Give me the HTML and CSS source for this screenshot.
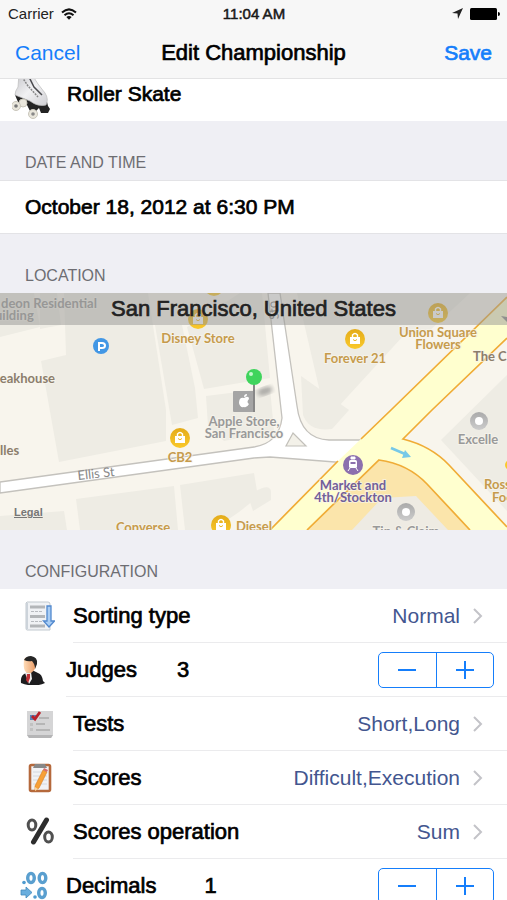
FILE: index.html
```html
<!DOCTYPE html>
<html lang="en">
<head>
    <meta charset="UTF-8">
    <meta name="viewport" content="width=device-width, initial-scale=1.0">
    <title>Edit Championship</title>
    <link rel="stylesheet" href="styles.css">
</head>
<body>
    <header class="top">
        <div class="status">
            <div class="status-left">
                <span>Carrier</span>
                <svg width="16" height="12" viewBox="0 0 16 12">
                    <g fill="none" stroke="#111" stroke-width="2">
                        <path d="M1 4.6Q8-1.800 15 4.600"/>
                        <path d="M3.500 7.300Q8 3.200 12.500 7.300"/>
                    </g>
                    <path d="M5.300 9Q8 6.800 10.700 9L8 11.800z" fill="#111"/>
                </svg>
            </div>
            <span class="clock">11:04 AM</span>
            <div class="status-right">
                <svg width="11" height="11" viewBox="0 0 11 11"><path d="M11 0L6 11L5.500 5.500L0 5z" fill="#222"/></svg>
                <svg width="30" height="12" viewBox="0 0 30 12">
                    <rect width="27" height="12" rx="1.500"/>
                    <path d="M28 4Q30 4 30 6Q30 8 28 8z"/>
                </svg>
            </div>
        </div>
        <nav class="nav">
            <button class="nav-btn">Cancel</button>
            <h1>Edit Championship</h1>
            <button class="nav-btn save">Save</button>
        </nav>
    </header>

    <main>
        <div class="row sport">
            <svg class="skate" width="40" height="54" viewBox="0 0 40 54">
                <defs>
                    <linearGradient id="boot" x1="0" x2="1" y2="1">
                        <stop offset="0" stop-color="#c4c4c8"/>
                        <stop offset=".5" stop-color="#f1f1f3"/>
                        <stop offset="1" stop-color="#d0d0d4"/>
                    </linearGradient>
                </defs>
                <path d="M3 28L5 25L20 32L35 35L36 39L38 42L36 46L29 46L27 41L24 44L18 44L15 38L6 35z" fill="#232323"/>
                <path d="M7 6L19 6L26 17L33 26Q37 32 34 38Q26 40 18 34L3 28Q3 24 6 20z" fill="url(#boot)" stroke="#bbb" stroke-width=".7"/>
                <path d="M10 10L16 19L26 30" fill="none" stroke="#888" stroke-width="1.500" stroke-dasharray="2 1"/>
                <path d="M16 8L22 20L30 28" fill="none" stroke="#4a4a4e" stroke-width="1.500"/>
                <g fill="#e9e6dc" stroke="#c9c6bb">
                    <circle cx="11" cy="36" r="4"/><circle cx="4" cy="39" r="4.500"/><circle cx="21" cy="47" r="4.500"/>
                </g>
                <circle cx="4" cy="39" r="1.800" fill="#777"/><circle cx="21" cy="47" r="1.800" fill="#888"/>
            </svg>
            <span class="label small">Roller Skate</span>
        </div>

        <h2>Date and Time</h2>
        <div class="row date"><span class="label small">October 18, 2012 at 6:30 PM</span></div>

        <h2>Location</h2>
        <section class="map">
            <svg class="map-art" viewBox="0 0 507 237" preserveAspectRatio="xMidYMid slice">
                <defs>
                    <linearGradient id="gold" x2="0" y2="1"><stop stop-color="#e3ab1a"/><stop offset="1" stop-color="#fac92b"/></linearGradient>
                    <linearGradient id="grey" x2="0" y2="1"><stop stop-color="#aaa"/><stop offset="1" stop-color="#ccc"/></linearGradient>
                    <filter id="soft"><feGaussianBlur stdDeviation="2"/></filter>
                    <g id="shop">
                        <circle r="10" fill="url(#gold)"/>
                        <path d="M-5-2H5V5H-5z" fill="#fff"/>
                        <path d="M-2.500-2V-4Q0-7 2.500-4V-2" fill="none" stroke="#fff" stroke-width="1.400"/>
                        <path d="M-2 .5Q0 3 2 .5" fill="none" stroke="#ebb723"/>
                    </g>
                    <g id="dot"><circle r="9" fill="url(#grey)"/><circle r="4" fill="#fff"/></g>
                </defs>
                <rect width="507" height="237" fill="#f8f5ed"/>
                <!-- buildings -->
                <g fill="#eeece4">
                    <path d="M0 0H34L40 34L0 44z"/>
                    <path d="M40 0H57L61 32L40 36z"/>
                    <path d="M64 0H148L166 117L166 148L59 169L41 68L66 62z"/>
                    <path d="M155 32H182L195 95L198 125L172 132z"/>
                    <path d="M187 34L240 0H262L270 85L204 96z"/>
                    <path d="M206 103L270 95L274 138L224 148L208 133z"/>
                    <path d="M76 206L174 193L178 237H80z"/>
                    <path d="M180 192L254 180L258 204L239 219L213 237H185z"/>
                    <path d="M0 223L64 218L67 237H0z"/>
                    <path d="M297 0H470L427 40L404 42L338 114L323 112z"/>
                    <path d="M301 83L349 117L332 136Q309 139 303 122z"/>
                    <path d="M507 82L441 147L507 218z"/>
                    <path d="M248 203Q270 188 271 199V207L253 218z"/>
                </g>
                <path d="M307 237L379 167Q410 173 427 191L470 237z" fill="#fbe5ab"/>
                <path d="M352 237L382 205L416 203L448 237z" fill="#eeebe3"/>
                <!-- Ellis and Stockton -->
                <path d="M0 189L254 154Q279 150 282 125L268 0H280L297 113Q301 146 329 147H366L348 170L270 164L254 165L0 200z" fill="#fff" stroke="#c4c2bd" stroke-width="1.300"/>
                <path d="M293 140L286 153H306z" fill="#f3f1e9" stroke="#c2c0ba" stroke-width="1.200"/>
                <!-- Market St -->
                <path d="M270 237L338 168L361 146L391 117L507 4V45L432 117L403 146Q431 153 449 172L507 234V237H470L427 191Q408 171 379 167L307 237z" fill="#ffffcf"/>
                <path d="M270 237L338 168M361 146L391 117L507 4M507 45L432 117L403 146Q431 153 449 172L507 234M470 237L427 191Q408 171 379 167L307 237" fill="none" stroke="#f0ac36" stroke-width="1.700"/>
                <path d="M391 155L405 161" stroke="#76c9e8" stroke-width="2.500"/>
                <path d="M405 157L411 164L402 165z" fill="#76c9e8"/>
                <use href="#shop" x="214" y="-7"/>
                <use href="#shop" x="198" y="26"/>
                <use href="#shop" x="438" y="20"/>
                <use href="#shop" x="355" y="46"/>
                <use href="#shop" x="180" y="145"/>
                <use href="#shop" x="221" y="232"/>
                <circle cx="510" cy="172" r="5" fill="#fac92b"/>
                <use href="#dot" x="479" y="128"/>
                <use href="#dot" x="406" y="219"/>
                <circle cx="101" cy="53" r="8" fill="#4297e5"/>
                <path d="M99 58V50H102Q105 50 105 52.500T102 55H99" fill="none" stroke="#fff" stroke-width="2"/>
                <circle cx="353" cy="172" r="10" fill="#8c70ae"/>
                <rect x="349" y="167" width="8" height="8" rx="1.500" fill="#fff"/>
                <path d="M351 164H355V166H351zM348 178L350 175M358 178L356 175" fill="#fff" stroke="#fff"/>
                <path d="M350.500 169H355.500V171H350.500z" fill="#8c70ae"/>
                <path d="M501 23L507 29V24" fill="#888"/>
                <g class="poi gold">
                    <text x="198" y="50">Disney Store</text>
                    <text x="438" y="44">Union Square</text>
                    <text x="438" y="56">Flowers</text>
                    <text x="355" y="70">Forever 21</text>
                    <text x="180" y="169">CB2</text>
                    <text x="143" y="239">Converse</text>
                    <text x="254" y="238">Diesel</text>
                    <text class="start" x="484" y="196">Rossi</text>
                    <text class="start" x="492" y="209">Foot</text>
                </g>
                <g class="poi brown">
                    <text class="start" x="-5" y="90">teakhouse</text>
                    <text class="start" x="0" y="162">lles</text>
                    <text class="start" x="473" y="68">The C</text>
                </g>
                <g class="poi grey">
                    <text class="start" x="1" y="15">deon Residential</text>
                    <text class="start" x="-5" y="27">uilding</text>
                    <text x="244" y="133">Apple Store,</text>
                    <text x="244" y="145">San Francisco</text>
                    <text x="478" y="151">Excelle</text>
                    <text x="406" y="243">Tip &amp; Claim</text>
                </g>
                <g class="poi purple">
                    <text x="353" y="197">Market and</text>
                    <text x="353" y="209">4th/Stockton</text>
                </g>
                <text class="street" transform="translate(78 187) rotate(-6)">Ellis St</text>
                <text class="street" transform="translate(279 26) rotate(-97)">Sto</text>
                <!-- Apple Store marker and the pin -->
                <rect x="233" y="98" width="22" height="21" rx="1" fill="#a5a5a5"/>
                <path d="M244 105Q249 102 249 106Q246 109 249 111Q247 115 244 114Q240 115 239 110Q239 104 244 105zM244 104Q244 101 247 101Q247 104 244 104" fill="#fff"/>
                <ellipse cx="265" cy="98" rx="8" ry="4" fill="#777" opacity=".55" filter="url(#soft)" transform="rotate(-20 265 98)"/>
                <path d="M254 91V119" stroke="#888" stroke-width="2"/>
                <circle cx="254" cy="84" r="8" fill="#3fd45c"/>
                <circle cx="251" cy="81" r="2" fill="#c5f7cd"/>
            </svg>
            <p class="map-title">San Francisco, United States</p>
            <a class="legal" href="#legal">Legal</a>
        </section>

        <h2>Configuration</h2>
        <ul class="config">
            <li>
                <a class="row" href="#sorting">
                    <svg class="icon" viewBox="0 0 30 30">
                        <path d="M2 1H23Q25 1 25 3V29H2Q1 29 1 27V2z" fill="#f0f2f5" stroke="#c2c9cf"/>
                        <path d="M2 2V28" stroke="#ccd3da" stroke-width="2"/>
                        <g stroke="#b3b6b9" stroke-width="3"><path d="M5 6H20M5 15.500H20M5 25H20"/></g>
                        <g stroke="#b8bbc0" stroke-dasharray="3 1"><path d="M6 10.500H18M6 20.500H18"/></g>
                        <path d="M22 5H26V20H29.500L24 26L18.500 20H22z" fill="#a9cdf4" stroke="#5289ce" stroke-width="1.300"/>
                    </svg>
                    <span class="cell"><span class="label">Sorting type</span><span class="value">Normal</span>
                    <svg class="chevron" viewBox="0 0 10 16"><path d="M1 1L8 8L1 15"/></svg></span>
                </a>
            </li>
            <li class="row stepper-row">
                <svg class="icon" viewBox="0 0 30 30">
                    <defs><linearGradient id="face" x2="1"><stop stop-color="#ffdcb8"/><stop offset="1" stop-color="#e89963"/></linearGradient></defs>
                    <path d="M3 28Q2 20 8 18L14 15L20 18Q24 19 25 26L27 28Q16 33 3 28z" fill="#1d1d1f"/>
                    <path d="M7 18L13 17L14 24L11 29z" fill="#eee"/>
                    <path d="M9 19L12 19L12 23L10 28L8 25z" fill="#c02f35"/>
                    <path d="M6 5Q6 2 11 2Q18 1 18 8Q18 15 13 18Q9 19 7 16Q5 12 6 5z" fill="url(#face)"/>
                    <path d="M6 5Q8 1 13 1Q20 2 19 9L17 14Q17 9 14 6Q10 7 6 5z" fill="#262626"/>
                </svg>
                <div class="cell">
                    <span class="label" id="judges">Judges</span><output class="count">3</output>
                    <div class="stepper" role="group" aria-labelledby="judges">
                        <button aria-label="Fewer judges"><svg viewBox="0 0 20 20"><path d="M1 10H19"/></svg></button>
                        <button aria-label="More judges"><svg viewBox="0 0 20 20"><path d="M1 10H19M10 1V19"/></svg></button>
                    </div>
                </div>
            </li>
            <li>
                <a class="row" href="#tests">
                    <svg class="icon" viewBox="0 0 30 30">
                        <path d="M2 2H28V26L26 29H4L2 26z" fill="#d5d5d6"/>
                        <path d="M2 26H28L26 29H4z" fill="#b5b5b6"/>
                        <path d="M14 9H24M11 15H20M11 21H25" stroke="#aaa" stroke-width="1.500"/>
                        <path d="M5 14H8V17H5zM5 19H8V22H5z" fill="#c1c1c1"/>
                        <rect x="5" y="6" width="6" height="5" fill="#5784b8"/>
                        <path d="M7 7L10 10L15 3" fill="none" stroke="#b8202a" stroke-width="2.800"/>
                    </svg>
                    <span class="cell"><span class="label">Tests</span><span class="value">Short,Long</span>
                    <svg class="chevron" viewBox="0 0 10 16"><path d="M1 1L8 8L1 15"/></svg></span>
                </a>
            </li>
            <li>
                <a class="row" href="#scores">
                    <svg class="icon" viewBox="0 0 30 30">
                        <rect x="5" y="2" width="20" height="26" rx="1.500" fill="#f1f2f5" stroke="#b5693c" stroke-width="2.600"/>
                        <path d="M10 1H20L22 5H8z" fill="#888"/>
                        <path d="M8 9H22M8 13H22M8 17H22M8 21H22" stroke="#d4d8df"/>
                        <path d="M18 7L22 9L14 25L10 28L10 23z" fill="#f7a037" stroke="#d67a20" stroke-width=".6"/>
                        <path d="M18 7L19 5L23 7L22 9z" fill="#d86d6a"/>
                        <path d="M10 24V28L13 26z" fill="#f5d4a3"/>
                    </svg>
                    <span class="cell"><span class="label">Scores</span><span class="value">Difficult,Execution</span>
                    <svg class="chevron" viewBox="0 0 10 16"><path d="M1 1L8 8L1 15"/></svg></span>
                </a>
            </li>
            <li>
                <a class="row" href="#operation">
                    <svg class="icon" viewBox="0 0 30 30">
                        <g fill="none" stroke="#505050" stroke-width="3"><ellipse cx="7" cy="8" rx="3.800" ry="5"/><ellipse cx="23.500" cy="20" rx="3.800" ry="5"/></g>
                        <path d="M21.500 3L8.500 25" stroke="#2d2d2d" stroke-width="5" stroke-linecap="round"/>
                    </svg>
                    <span class="cell"><span class="label">Scores operation</span><span class="value">Sum</span>
                    <svg class="chevron" viewBox="0 0 10 16"><path d="M1 1L8 8L1 15"/></svg></span>
                </a>
            </li>
            <li class="row stepper-row">
                <svg class="icon" viewBox="0 0 30 30">
                    <g fill="none" stroke="#5a9fcf" stroke-width="3.400"><ellipse cx="13" cy="7" rx="3.300" ry="4.600"/><ellipse cx="24.500" cy="7" rx="3.300" ry="4.600"/><ellipse cx="24" cy="22" rx="3.300" ry="4.600"/></g>
                    <g fill="#4f9bcf"><circle cx="6" cy="11.500" r="1.800"/><circle cx="17" cy="26" r="1.800"/></g>
                    <path d="M3 19H8V16L14 21.500L8 27V24H3z" fill="#69aede" stroke="#4388ba" stroke-width=".8"/>
                </svg>
                <div class="cell">
                    <span class="label" id="decimals">Decimals</span><output class="count wide">1</output>
                    <div class="stepper" role="group" aria-labelledby="decimals">
                        <button aria-label="Fewer decimals"><svg viewBox="0 0 20 20"><path d="M1 10H19"/></svg></button>
                        <button aria-label="More decimals"><svg viewBox="0 0 20 20"><path d="M1 10H19M10 1V19"/></svg></button>
                    </div>
                </div>
            </li>
        </ul>
    </main>
</body>
</html>
```
FILE: styles.css
```css
* {
    box-sizing: border-box;
}

body {
    margin: 0;
    height: 100vh;
    display: flex;
    flex-direction: column;
    overflow: hidden;
    background: #efeff4;
    color: #000;
    font-family: "Liberation Sans", Arial, sans-serif;
    font-size: 21px;
}

a {
    color: inherit;
    text-decoration: none;
}

button {
    font: inherit;
    background: none;
    border: none;
    padding: 0;
    cursor: pointer;
}

.top {
    background: #f7f7f7;
    border-bottom: 1px solid #e3e3e4;
}

.status,
.nav {
    display: grid;
    grid-template-columns: 1fr auto 1fr;
    align-items: center;
}

.status {
    height: 27px;
    padding: 0 7px 0 8px;
    font-size: 15px;
    color: #222;
}

.status-left,
.status-right {
    display: flex;
    align-items: center;
    gap: 7px;
}

.status-right {
    justify-content: flex-end;
}

.clock {
    -webkit-text-stroke: 0.5px #111;
}

.nav {
    height: 51px;
    padding: 0 15px;
}

.nav h1 {
    margin: 0;
    font-size: 22px;
    font-weight: normal;
    -webkit-text-stroke: 0.7px #000;
}

.nav-btn {
    color: #157efb;
    text-align: left;
}

.save {
    text-align: right;
    -webkit-text-stroke: 0.7px #157efb;
}

main {
    flex: 1;
    overflow-y: auto;
    scrollbar-width: none;
}

h2 {
    margin: 0;
    height: 59px;
    padding: 32px 25px 0;
    font-size: 16px;
    line-height: 20px;
    font-weight: normal;
    text-transform: uppercase;
    color: #6d6d72;
}

.row {
    display: flex;
    align-items: center;
    height: 54px;
    padding-left: 25px;
    background: #fff;
}

.label,
.count {
    font-size: 22px;
    -webkit-text-stroke: 0.7px #000;
}

.small {
    font-size: 21px;
}

/* scrolled partly under the navigation bar */
.sport {
    margin-top: -12px;
    padding-left: 12px;
    gap: 15px;
}

.date {
    border-top: 1px solid #e3e3e6;
    border-bottom: 1px solid #e3e3e6;
}

.map {
    position: relative;
    height: 237px;
    overflow: hidden;
}

.map-art {
    display: block;
    width: 100%;
    height: 100%;
}

.map-title {
    position: absolute;
    top: 0;
    left: 0;
    right: 0;
    margin: 0;
    background: rgba(150, 150, 148, 0.5);
    color: #222;
    font-size: 22px;
    line-height: 32px;
    text-align: center;
    -webkit-text-stroke: 0.7px #222;
}

.legal {
    position: absolute;
    left: 14px;
    bottom: 12px;
    font-size: 11px;
    font-weight: bold;
    color: #777;
    text-decoration: underline;
}

.poi {
    font-family: Lato, sans-serif;
    font-size: 13px;
    font-weight: bold;
    text-anchor: middle;
    paint-order: stroke;
    stroke: rgba(248, 245, 237, 0.7);
    stroke-width: 2px;
}

.start {
    text-anchor: start;
}

.gold {
    fill: #c69b4c;
}

.brown {
    fill: #8c7e6c;
}

.grey {
    fill: #999;
}

.purple {
    fill: #725f99;
}

.street {
    font-family: Lato, sans-serif;
    font-size: 13px;
    fill: #888;
}

.config {
    margin: 0;
    padding: 0;
    list-style: none;
}

.icon {
    width: 30px;
    height: 30px;
    flex: none;
    margin-right: 18px;
}

.cell {
    flex: 1;
    align-self: stretch;
    display: flex;
    align-items: center;
    padding-right: 24px;
    border-bottom: 1px solid #ebebed;
}

.value {
    margin-left: auto;
    color: #43568f;
}

.chevron {
    width: 10px;
    height: 16px;
    margin-left: 13px;
    fill: none;
    stroke: #c3c3c8;
    stroke-width: 2;
}

.stepper-row {
    padding-left: 18px;
}

.stepper-row .cell {
    padding-right: 13px;
}

.count {
    margin-left: 40px;
}

.wide {
    margin-left: 48px;
}

.stepper {
    display: flex;
    width: 116px;
    height: 36px;
    margin-left: auto;
    border: 1px solid #157efb;
    border-radius: 5px;
}

.stepper button {
    flex: 1;
    display: flex;
    align-items: center;
    justify-content: center;
}

.stepper button + button {
    border-left: 1px solid #157efb;
}

.stepper svg {
    width: 20px;
    height: 20px;
    fill: none;
    stroke: #157efb;
    stroke-width: 2;
}
```
